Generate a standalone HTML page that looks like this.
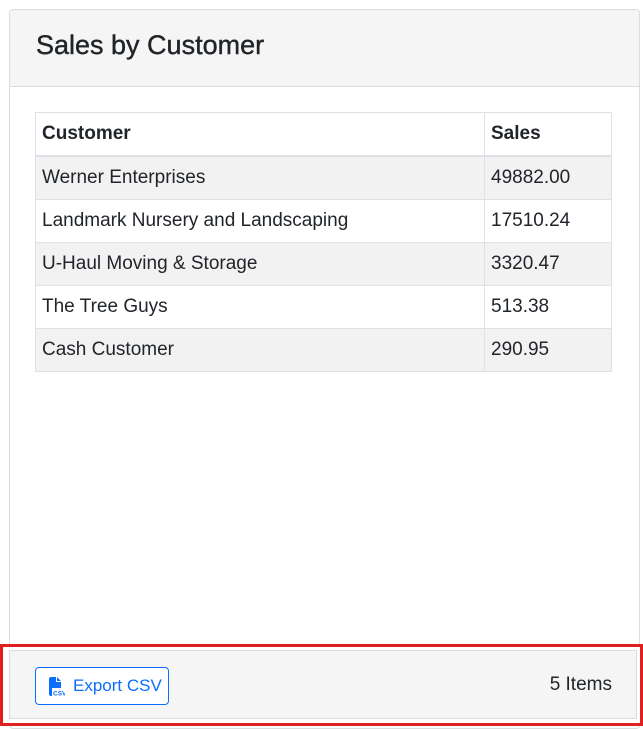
<!DOCTYPE html>
<html><head><style>
body{margin:0;width:643px;height:726px;background:#fff;font-family:"Liberation Sans",sans-serif;color:#212529;position:relative;overflow:hidden}
.card{position:absolute;left:9px;top:9px;width:631px;height:720px;border:1px solid #dcdcdc;border-radius:4px;box-sizing:border-box}
.hdr{height:77px;background:#f5f5f5;border-bottom:1px solid #dcdcdc;box-sizing:border-box;border-radius:4px 4px 0 0}
.hdr h1{margin:0;font-size:27px;font-weight:normal;position:absolute;left:26px;top:20px;-webkit-text-stroke:.4px #212529}
table{position:absolute;left:25px;top:102px;width:577px;border-collapse:collapse;font-size:19px}
td,th{border:1px solid #dee2e6;height:42px;padding:0 6px;text-align:left}
th{border-bottom:2px solid #dee2e6}
tr.s td{background:#f2f2f2}
.foot{position:absolute;left:0;top:644px;width:643px;height:82px;border:3px solid #e0201f;box-sizing:border-box;background:#fff}
.fin{position:absolute;left:6px;top:3px;right:3px;bottom:4px;background:#f5f5f5;border:1px solid #ddd}
.btn{position:absolute;left:35px;top:667px;width:134px;height:38px;border:1px solid #0d6efd;border-radius:4px;box-sizing:border-box;color:#0d6efd;font-size:17px;line-height:36px;padding-left:37px;background:#fff}
.items{position:absolute;right:31px;top:674px;font-size:19px}
</style></head><body>
<div class="card"><div class="hdr"><h1>Sales by Customer</h1></div>
<table>
<tr><th style="width:436px">Customer</th><th>Sales</th></tr>
<tr class="s"><td>Werner Enterprises</td><td>49882.00</td></tr>
<tr><td>Landmark Nursery and Landscaping</td><td>17510.24</td></tr>
<tr class="s"><td>U-Haul Moving &amp; Storage</td><td>3320.47</td></tr>
<tr><td>The Tree Guys</td><td>513.38</td></tr>
<tr class="s"><td>Cash Customer</td><td>290.95</td></tr>
</table></div>
<div class="foot"><div class="fin"></div></div>
<div class="btn"><svg style="position:absolute;left:13px;top:9px" width="16" height="19" viewBox="0 0 16 19"><path d="M0 2a2 2 0 0 1 2-2h5v5h5v6H3v8H2a2 2 0 0 1-2-2z" fill="#0d6efd"/><path d="M8 0l4 4H8z" fill="#0d6efd"/><text x="4" y="18.5" font-size="6.5" font-weight="bold" fill="#0d6efd" font-family="Liberation Sans">CSV</text></svg>Export CSV</div>
<div class="items">5 Items</div>
</body></html>
